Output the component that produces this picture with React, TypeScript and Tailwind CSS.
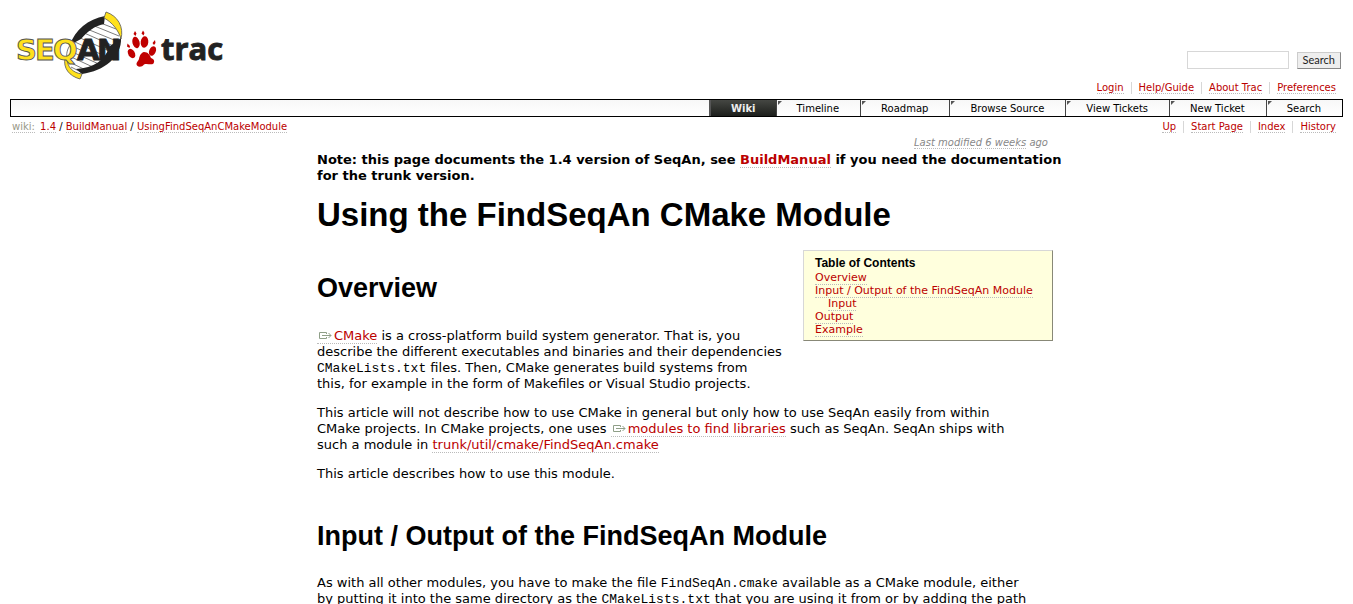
import type { ReactNode } from "react";

const linkClass =
  "text-[#bb0000] border-b border-dotted border-[#bbbbbb] hover:bg-[#eeeeee] hover:text-[#555555]";

function Link({ href = "#", children }: { href?: string; children: ReactNode }) {
  return (
    <a href={href} className={linkClass}>
      {children}
    </a>
  );
}

function ExternalLink({ children }: { children: ReactNode }) {
  return (
    <a href="#" className={linkClass}>
      <svg
        className="mr-px ml-px inline-block h-[9px] w-[15px] align-baseline"
        viewBox="0 0 15 9"
        fill="none"
        stroke="#8f9f88"
        strokeWidth="1"
        aria-hidden="true"
      >
        <path d="M8.5 3V1.5H1.5V7.5H8.5V6M4 4.5H13M10.5 2L13 4.5L10.5 7" />
      </svg>
      {children}
    </a>
  );
}

function Code({ children }: { children: ReactNode }) {
  return <code className="font-['Liberation_Mono',monospace] text-[13px] leading-none">{children}</code>;
}

function Logo() {
  return (
    <svg className="block h-[72px] w-[212px]" viewBox="14 10 212 72" role="img" aria-label="SeqAn Trac">
      <path d="M105 17C88 21 73 33 69 48C66 57 68 65 77 73C94 70 108 61 115 50C120 42 121 34 117 28C113 22 109 19 105 17Z" fill="#fff" />
      <path
        d="M98 22L116 29M92 25L119 36M87 29L119 42M82 32L118 48M78 37L116 54M75 42L111 59M72 46L106 62M70 51L101 65M69 56L95 68M69 62L88 71M71 67L81 72"
        stroke="#444"
        strokeWidth="0.7"
        fill="none"
      />
      <path d="M105 16L104 24C94 26 87 32 81 39L70 45C75 30 88 19 105 16Z" fill="#222" />
      <path d="M121 38C122 57 104 71 82 74L76 69C94 68 105 60 110 46Z" fill="#222" />
      <path d="M106 12C118 16 124 27 121 39C119 31 112 22 104 18Z" fill="#ffe11c" stroke="#555" strokeWidth="0.8" />
      <path d="M67 58C67 67 73 73 82 74L80 79C69 76 63 68 65 58Z" fill="#ffe11c" stroke="#555" strokeWidth="0.8" />
      <path d="M72 43C67 48 66 54 67 60" fill="none" stroke="#555" strokeWidth="0.8" />
      <g fontFamily="DejaVu Sans, sans-serif" fontWeight="700" fontSize="29">
        <g fill="#ffe11c" stroke="#555" strokeWidth="0.9">
          <text x="16" y="60">S</text>
          <text x="35" y="60">E</text>
          <text x="53" y="60">Q</text>
        </g>
        <g fill="#222" stroke="#222" strokeWidth="0.9">
          <text x="77" y="60">A</text>
          <text x="97" y="60">N</text>
        </g>
      </g>
      <g fill="#c00000">
        <ellipse cx="136" cy="42.5" rx="3.6" ry="5.8" transform="rotate(-14 136 42.5)" />
        <ellipse cx="144.5" cy="42" rx="3.8" ry="5.8" transform="rotate(6 144.5 42)" />
        <ellipse cx="131.5" cy="53.5" rx="3.3" ry="5" transform="rotate(-30 131.5 53.5)" />
        <ellipse cx="152.5" cy="51" rx="3.3" ry="5" transform="rotate(24 152.5 51)" />
        <path d="M135 31L136.5 33.5L135.5 36L133.5 34ZM143 30.5L144.5 33L143.5 35.5L141.5 33.5ZM127.5 43.5L130 46L129.5 48L127 46.5ZM155 40L155.5 43L154 45L152.5 43Z" />
        <path d="M144 52C148 52 150 55 151 58C154 59 155 61 153.5 63.500C151 65.5 147 63 144 64.5C142 67 139 67.5 137 65.5C135.5 63 138 61.5 139 59C139.500 56 141 52.500 144 52Z" />
      </g>
      <text x="161" y="60" fill="#222" stroke="#222" strokeWidth="0.9" fontFamily="Open Sans, sans-serif" fontWeight="700" fontSize="31">
        trac
      </text>
    </svg>
  );
}

function LinkBar({ items, label }: { items: string[]; label: string }) {
  return (
    <nav aria-label={label}>
      <ul className="flex divide-x divide-[#d7d7d7] leading-[12px]">
        {items.map((item) => (
          <li key={item} className="px-[7px]">
            <Link>{item}</Link>
          </li>
        ))}
      </ul>
    </nav>
  );
}

const tabs = ["Timeline", "Roadmap", "Browse Source", "View Tickets", "New Ticket", "Search"];

function MainNav() {
  return (
    <nav
      aria-label="Main"
      className="flex justify-end border border-black bg-linear-to-b from-[#f7f7f7] to-white leading-[15px]"
    >
      <a href="#" className="border-l-2 border-[#555555] bg-linear-to-b from-[#454743] to-[#1d1f1c] px-5 pt-px font-bold text-[#eeeeee]">
        Wiki
      </a>
      {tabs.map((tab) => (
        <a key={tab} href="#" className="relative border-l border-[#444444] pt-px pr-[21px] pl-5 text-black">
          <svg className="absolute top-px left-px size-1" viewBox="0 0 4 4" aria-hidden="true">
            <path d="M0 0H4L0 4Z" fill="#555555" />
          </svg>
          {tab}
        </a>
      ))}
    </nav>
  );
}

function Contents() {
  return (
    <aside className="float-right mb-[30px] ml-[10px] w-[250px] border border-t-[#d7d7d7] border-r-[#888877] border-b-[#888877] border-l-[#d7d7d7] bg-[#ffffdd] px-[11px] pt-[5px] pb-[4px] text-[11px] leading-[13px]">
      <h4 className="pb-px font-['Liberation_Sans',sans-serif] text-[12px] leading-[14px] font-bold">Table of Contents</h4>
      <ol>
        <li><Link>Overview</Link></li>
        <li>
          <Link>Input / Output of the FindSeqAn Module</Link>
          <ol className="pl-[13px]">
            <li><Link>Input</Link></li>
          </ol>
        </li>
        <li><Link>Output</Link></li>
        <li><Link>Example</Link></li>
      </ol>
    </aside>
  );
}

export default function App() {
  return (
    <div className="min-h-screen bg-white px-[10px] pt-[10px] font-['DejaVu_Sans',sans-serif] text-[10px] text-black">
      <header className="flex items-end justify-between">
        <a href="#" className="mb-[17px] ml-1">
          <Logo />
        </a>
        <div className="flex flex-col items-end">
          <form className="mr-[2px] mb-[13px] flex items-center gap-2" onSubmit={(e) => e.preventDefault()}>
            <input type="text" aria-label="Search" className="h-[18px] w-[102px] border border-[#d7d7d7] bg-white px-1" />
            <button
              type="submit"
              className="h-[17px] border border-t-[#cccccc] border-r-[#888888] border-b-[#888888] border-l-[#cccccc] bg-[#eeeeee] px-[5px] font-['Lato',sans-serif] text-[11px] leading-[14px] text-[#222222]"
            >
              Search
            </button>
          </form>
          <div className="mb-[5px]">
            <LinkBar label="Account" items={["Login", "Help/Guide", "About Trac", "Preferences"]} />
          </div>
        </div>
      </header>
      <MainNav />
      <div className="flex justify-between pt-[4px] leading-[12px]">
        <div className="pl-[2px]">
          <a href="#" className="mr-[2px] border-b border-dotted border-[#bbbbbb] text-[#999988]">wiki:</a>{" "}
          <Link>1.4</Link> / <Link>BuildManual</Link> / <Link>UsingFindSeqAnCMakeModule</Link>
        </div>
        <LinkBar label="Context" items={["Up", "Start Page", "Index", "History"]} />
      </div>

      <main className="pl-[17px]">
        <div className="mx-auto max-w-[736px] text-[13px] leading-[16px]">
          <p className="pt-[4px] pr-[5px] text-right text-[10px] leading-[12px] text-[#888888] italic">
            <a href="#" className="border-b border-dotted border-[#bbbbbb]">Last modified</a>{" "}
            <a href="#" className="border-b border-dotted border-[#bbbbbb]">6 weeks</a> ago
          </p>
          <p className="pt-[3px] font-bold sm:whitespace-nowrap">
            Note: this page documents the 1.4 version of SeqAn, see <Link>BuildManual</Link> if you need the documentation
            <br />
            for the trunk version.
          </p>
          <h1 className="mt-[12px] font-['Liberation_Sans',sans-serif] text-[33px] leading-[38px] font-bold">
            Using the FindSeqAn CMake Module
          </h1>
          <div className="mt-[16px]">
            <Contents />
            <h2 className="pt-[22px] font-['Liberation_Sans',sans-serif] text-[27px] leading-[32px] font-bold">Overview</h2>
            <p className="mt-[24px]">
              <ExternalLink>CMake</ExternalLink> is a cross-platform build system generator. That is, you
              <br />
              describe the different executables and binaries and their dependencies
              <br />
              <Code>CMakeLists.txt</Code> files. Then, CMake generates build systems from
              <br />
              this, for example in the form of Makefiles or Visual Studio projects.
            </p>
            <p className="mt-[13px]">
              This article will not describe how to use CMake in general but only how to use SeqAn easily from within
              <br />
              CMake projects. In CMake projects, one uses <ExternalLink>modules to find libraries</ExternalLink> such as
              SeqAn. SeqAn ships with
              <br />
              such a module in <Link>trunk/util/cmake/FindSeqAn.cmake</Link>
            </p>
            <p className="mt-[13px]">This article describes how to use this module.</p>
            <h2 className="mt-[38px] font-['Liberation_Sans',sans-serif] text-[27px] leading-[32px] font-bold">
              Input / Output of the FindSeqAn Module
            </h2>
            <p className="mt-[23px]">
              As with all other modules, you have to make the file <Code>FindSeqAn.cmake</Code> available as a CMake module,
              either
              <br />
              by putting it into the same directory as the <Code>CMakeLists.txt</Code> that you are using it from or by
              adding the path
            </p>
          </div>
        </div>
      </main>
    </div>
  );
}
